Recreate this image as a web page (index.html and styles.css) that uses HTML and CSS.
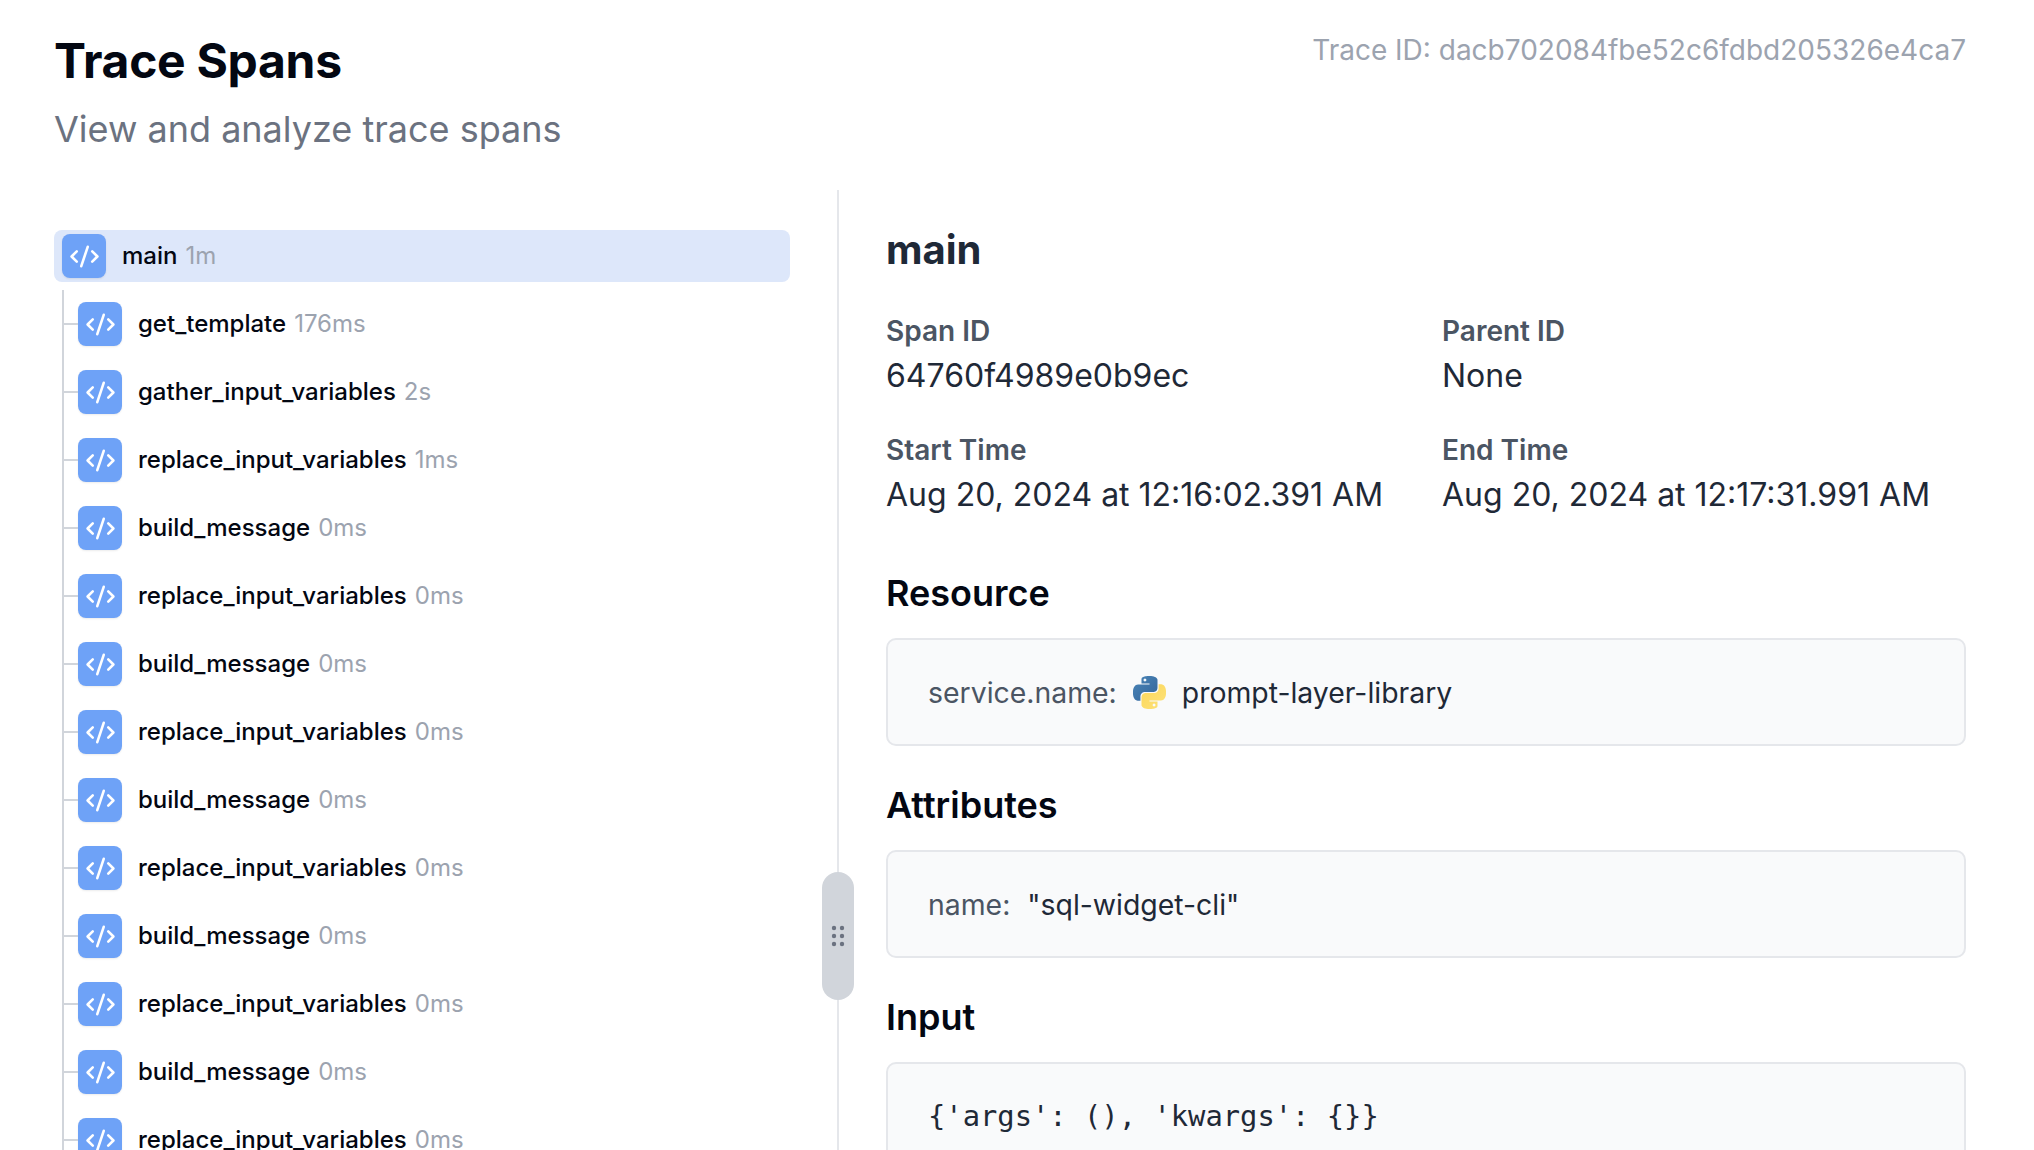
FILE: index.html
```html
<!DOCTYPE html>
<html lang="en">
<head>
<meta charset="utf-8">
<title>Trace Spans</title>
<link rel="stylesheet" href="styles.css">
</head>
<body>
<svg class="defs" width="0" height="0" aria-hidden="true">
  <defs>
    <symbol id="code" viewBox="0 0 24 24"><path d="m18 16 4-4-4-4M6 8l-4 4 4 4M14.5 4.5l-5 15"/></symbol>
    <linearGradient id="pyblue" x1="0" y1="0" x2="1" y2="1"><stop offset="0" stop-color="#4b86b8"/><stop offset="1" stop-color="#33649a"/></linearGradient>
    <linearGradient id="pyyellow" x1="0" y1="0" x2="1" y2="1"><stop offset="0" stop-color="#fbd65a"/><stop offset="1" stop-color="#fde27a"/></linearGradient>
  </defs>
</svg>
<header class="top">
  <div>
    <h1 class="title">Trace Spans</h1>
    <p class="subtitle">View and analyze trace spans</p>
  </div>
  <div class="trace-id">Trace ID: dacb702084fbe52c6fdbd205326e4ca7</div>
</header>
<main class="split">
  <section class="tree">
    <div class="row selected">
      <span class="icon"><svg><use href="#code"/></svg></span>
      <span class="name">main</span><span class="dur">1m</span>
    </div>
    <div class="children">
      <div class="row child"><span class="icon"><svg><use href="#code"/></svg></span><span class="name">get_template</span><span class="dur">176ms</span></div>
      <div class="row child"><span class="icon"><svg><use href="#code"/></svg></span><span class="name">gather_input_variables</span><span class="dur">2s</span></div>
      <div class="row child"><span class="icon"><svg><use href="#code"/></svg></span><span class="name">replace_input_variables</span><span class="dur">1ms</span></div>
      <div class="row child"><span class="icon"><svg><use href="#code"/></svg></span><span class="name">build_message</span><span class="dur">0ms</span></div>
      <div class="row child"><span class="icon"><svg><use href="#code"/></svg></span><span class="name">replace_input_variables</span><span class="dur">0ms</span></div>
      <div class="row child"><span class="icon"><svg><use href="#code"/></svg></span><span class="name">build_message</span><span class="dur">0ms</span></div>
      <div class="row child"><span class="icon"><svg><use href="#code"/></svg></span><span class="name">replace_input_variables</span><span class="dur">0ms</span></div>
      <div class="row child"><span class="icon"><svg><use href="#code"/></svg></span><span class="name">build_message</span><span class="dur">0ms</span></div>
      <div class="row child"><span class="icon"><svg><use href="#code"/></svg></span><span class="name">replace_input_variables</span><span class="dur">0ms</span></div>
      <div class="row child"><span class="icon"><svg><use href="#code"/></svg></span><span class="name">build_message</span><span class="dur">0ms</span></div>
      <div class="row child"><span class="icon"><svg><use href="#code"/></svg></span><span class="name">replace_input_variables</span><span class="dur">0ms</span></div>
      <div class="row child"><span class="icon"><svg><use href="#code"/></svg></span><span class="name">build_message</span><span class="dur">0ms</span></div>
      <div class="row child"><span class="icon"><svg><use href="#code"/></svg></span><span class="name">replace_input_variables</span><span class="dur">0ms</span></div>
    </div>
  </section>
  <div class="divider">
    <div class="handle">
      <svg viewBox="0 0 14 22" class="grip"><circle cx="3" cy="3" r="2.2"/><circle cx="11" cy="3" r="2.2"/><circle cx="3" cy="11" r="2.2"/><circle cx="11" cy="11" r="2.2"/><circle cx="3" cy="19" r="2.2"/><circle cx="11" cy="19" r="2.2"/></svg>
    </div>
  </div>
  <section class="detail">
    <h2 class="span-name">main</h2>
    <div class="meta">
      <div class="meta-item"><div class="label">Span ID</div><div class="value">64760f4989e0b9ec</div></div>
      <div class="meta-item"><div class="label">Parent ID</div><div class="value">None</div></div>
      <div class="meta-item"><div class="label">Start Time</div><div class="value">Aug 20, 2024 at 12:16:02.391 AM</div></div>
      <div class="meta-item"><div class="label">End Time</div><div class="value">Aug 20, 2024 at 12:17:31.991 AM</div></div>
    </div>
    <h3 class="heading">Resource</h3>
    <div class="box">
      <span class="key">service.name:</span>
      <svg class="py" viewBox="0 0 24 24">
        <path fill="url(#pyblue)" d="M14.25.18l.9.2.73.26.59.3.45.32.34.34.25.34.16.33.1.3.04.26.02.2-.01.13V8.5l-.05.63-.13.55-.21.46-.26.38-.3.31-.33.25-.35.19-.35.14-.33.1-.3.07-.26.04-.21.02H8.77l-.69.05-.59.14-.5.22-.41.27-.33.32-.27.35-.2.36-.15.37-.1.35-.07.32-.04.27-.02.21v3.06H3.17l-.21-.03-.28-.07-.32-.12-.35-.18-.36-.26-.36-.36-.35-.46-.32-.59-.28-.73-.21-.88-.14-1.05-.05-1.23.06-1.22.16-1.04.24-.87.32-.71.36-.57.4-.44.42-.33.42-.24.4-.16.36-.1.32-.05.24-.01h.16l.06.01h8.16v-.83H6.18l-.01-2.75-.02-.37.05-.34.11-.31.17-.28.25-.26.31-.23.38-.2.44-.18.51-.15.58-.12.64-.1.71-.06.77-.04.84-.02 1.27.05zm-6.3 1.98l-.23.33-.08.41.08.41.23.34.33.22.41.09.41-.09.33-.22.23-.34.08-.41-.08-.41-.23-.33-.33-.22-.41-.09-.41.09z"/>
        <path fill="url(#pyyellow)" d="M21.04 6.11l.28.06.32.12.35.18.36.27.36.35.35.47.32.59.28.73.21.88.14 1.04.05 1.23-.06 1.23-.16 1.04-.24.86-.32.71-.36.57-.4.45-.42.33-.42.24-.4.16-.36.09-.32.05-.24.02-.16-.01h-8.22v.82h5.84l.01 2.76.02.36-.05.34-.11.31-.17.29-.25.25-.31.24-.38.2-.44.17-.51.15-.58.13-.64.09-.71.07-.77.04-.84.01-1.27-.04-1.07-.14-.9-.2-.73-.25-.59-.3-.45-.33-.34-.34-.25-.34-.16-.33-.1-.3-.04-.25-.02-.2.01-.13v-5.34l.05-.64.13-.54.21-.46.26-.38.3-.32.33-.24.35-.2.35-.14.33-.1.3-.06.26-.04.21-.02.13-.01h5.84l.69-.05.59-.14.5-.21.41-.28.33-.32.27-.35.2-.36.15-.36.1-.35.07-.32.04-.28.02-.21V6.07h2.09l.14.01zm-6.47 14.25l-.23.33-.08.41.08.41.23.33.33.23.41.08.41-.08.33-.23.23-.33.08-.41-.08-.41-.23-.33-.33-.23-.41-.08-.41.08z"/>
      </svg>
      <span class="val">prompt-layer-library</span>
    </div>
    <h3 class="heading">Attributes</h3>
    <div class="box">
      <span class="key">name:</span>
      <span class="val attr">"sql-widget-cli"</span>
    </div>
    <h3 class="heading">Input</h3>
    <div class="box code">{'args': (), 'kwargs': {}}</div>
  </section>
</main>
</body>
</html>
```
FILE: styles.css
```css
* { box-sizing: border-box; }
html, body { margin: 0; height: 100%; overflow: hidden; background: #fff; }
body { font-family: Inter, "Noto Sans", sans-serif; color: #111827; }
.defs { position: absolute; }

.top {
  display: flex;
  justify-content: space-between;
  align-items: flex-start;
  padding: 31px 68px 0 54px;
  height: 190px;
}
.title { margin: 0; font-size: 48px; line-height: 60px; font-weight: 700; letter-spacing: -0.3px; color: #030712; }
.subtitle { margin: 14px 0 0; font-size: 36px; line-height: 48px; color: #6b7280; }
.trace-id { margin-top: -1px; font-size: 28px; line-height: 40px; color: #9ca3af; }

.split { display: flex; height: 960px; overflow: hidden; }

.tree { width: 837px; flex: none; padding: 40px 47px 0 54px; }
.row { display: flex; align-items: center; height: 52px; font-size: 24px; border-radius: 8px; }
.selected { background: #dde7fa; padding-left: 8px; }
.icon {
  flex: none;
  width: 44px;
  height: 44px;
  border-radius: 8px;
  background: #6ea2f7;
  display: flex;
  align-items: center;
  justify-content: center;
  margin-right: 16px;
  box-shadow: 0 1px 2px rgba(0, 0, 0, .08);
}
.icon svg { width: 31px; height: 31px; fill: none; stroke: #fff; stroke-width: 2; stroke-linecap: round; stroke-linejoin: round; }
.name { font-weight: 500; color: #030712; padding-bottom: 2px; }
.dur { margin-left: 8px; color: #9ca3af; padding-bottom: 2px; }

.children {
  margin: 8px 0 0 8px;
  border-left: 2px solid #d1d5db;
  padding: 8px 0 0 14px;
  display: flex;
  flex-direction: column;
  gap: 16px;
}
.child { position: relative; }
.child::before {
  content: "";
  position: absolute;
  left: -14px;
  top: 25px;
  width: 14px;
  height: 2px;
  background: #d1d5db;
}

.divider { width: 2px; flex: none; background: #e5e7eb; position: relative; }
.handle {
  position: absolute;
  left: -15px;
  top: 682px;
  width: 32px;
  height: 128px;
  border-radius: 16px;
  background: #d1d5db;
  display: flex;
  align-items: center;
  justify-content: center;
}
.grip { width: 14px; height: 22px; fill: #6b7280; }

.detail { flex: 1; min-width: 0; padding: 34px 68px 0 47px; }
.span-name { margin: 0; font-size: 40px; line-height: 52px; font-weight: 700; color: #1f2937; }
.meta { display: grid; grid-template-columns: 1fr 1fr; column-gap: 32px; row-gap: 34px; margin: 37px 0 54px; }
.label { font-size: 28px; line-height: 36px; font-weight: 600; color: #4b5563; }
.value { font-size: 32px; line-height: 44px; margin-top: 5px; color: #1f2937; }
.heading { margin: 37px 0 23px; font-size: 36px; line-height: 44px; font-weight: 600; color: #030712; }
.box {
  display: flex;
  align-items: center;
  height: 108px;
  padding: 0 40px;
  background: #f9fafb;
  border: 2px solid #e5e7eb;
  border-radius: 10px;
  font-size: 28.4px;
}
.key { color: #4b5563; }
.py { width: 33px; height: 33px; margin: 0 16px; flex: none; }
.val { color: #1f2937; }
.attr { margin-left: 17px; }
.code { font-family: "DejaVu Sans Mono", monospace; font-size: 28.8px; color: #1f2937; }
```
